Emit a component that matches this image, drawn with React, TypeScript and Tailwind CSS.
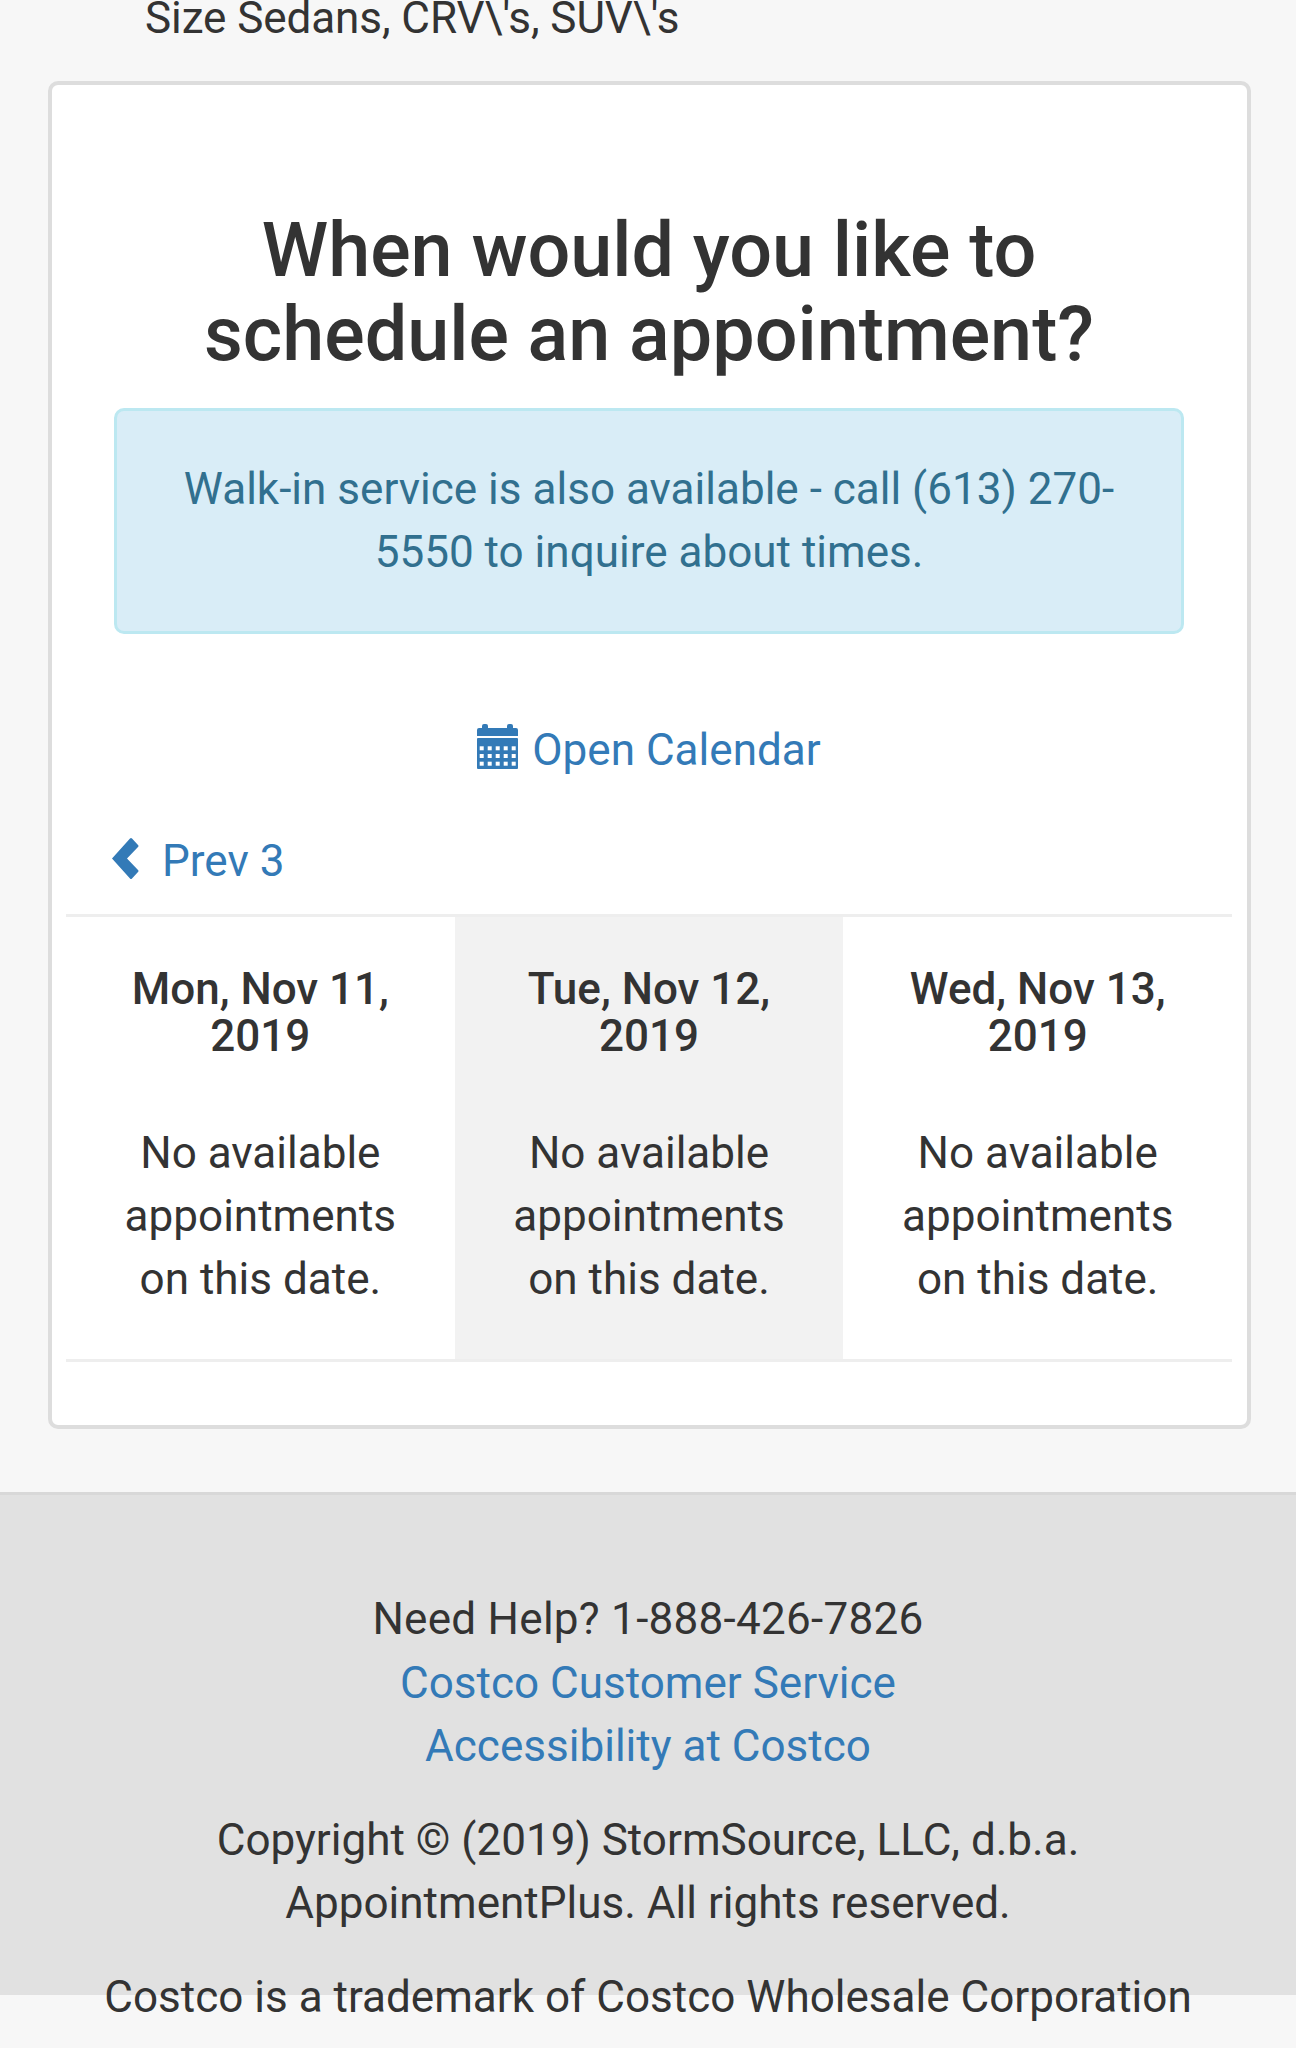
const font = "font-['Roboto',sans-serif]";

const days = ['Mon, Nov 11, 2019', 'Tue, Nov 12, 2019', 'Wed, Nov 13, 2019'];

function CalendarIcon() {
  const dots = [];
  for (let r = 0; r < 3; r++) {
    for (let c = 0; c < 5; c++) {
      dots.push(<rect key={`${r}-${c}`} x={2.7 + c * 8} y={22.3 + r * 7.7} width="4" height="4" fill="#fff" />);
    }
  }
  return (
    <svg viewBox="0 0 41 45" className="w-[41px] h-[45px] mb-[8px] shrink-0" fill="#337ab7">
      <path d="M2 4h3V2a2 2 0 0 1 2-2h2a2 2 0 0 1 2 2v2h19V2a2 2 0 0 1 2-2h2a2 2 0 0 1 2 2v2h3a2 2 0 0 1 2 2v6H0V6a2 2 0 0 1 2-2z" />
      <rect x="0" y="14" width="41" height="31" rx="1" />
      {dots}
    </svg>
  );
}

function ChevronIcon() {
  return (
    <svg viewBox="0 0 27 41" className="w-[27px] h-[41px] mb-[6px] shrink-0" fill="#337ab7">
      <path d="M0 20.5 18 .5q1-1 2 0l6 6.5q1 1 0 2L15 20.5 26 32q1 1 0 2l-6 6.5q-1 1-2 0z" />
    </svg>
  );
}

function DayColumn({ label, active }: { label: string; active?: boolean }) {
  return (
    <div className={`flex-1 px-[50px] pt-[49px] pb-[48px] text-center ${active ? 'bg-[#f2f2f2]' : ''}`}>
      <h5 className="text-[44px] leading-[47px] font-medium">{label}</h5>
      <p className="mt-[62px] leading-[63px]">No available appointments on this date.</p>
    </div>
  );
}

export default function App() {
  return (
    <div className={`${font} bg-[#f7f7f7] text-[#333] h-[2048px] overflow-hidden text-[44.06px] leading-[63px]`}>
      <div className="-mt-[13px] pl-[145px] tracking-[-0.1px]">Size Sedans, CRV\'s, SUV\'s</div>

      <div className="ml-[48px] mr-[45px] mt-[31px] h-[1348px] border-[4px] border-[#ddd] rounded-[10px] bg-white pl-[14px] pr-[15px]">
        <h3 className="mt-[124px] text-center text-[75.5px] leading-[83.6px] font-medium">
          When would you like to
          <br />
          schedule an appointment?
        </h3>

        <div className="ml-[48px] mr-[48px] mt-[32px] h-[226px] border-[3px] border-[#bce8f1] rounded-[10px] bg-[#d9edf7] px-[50px] pt-[47px] text-center text-[#31708f]">
          Walk-in service is also available - call (613) 270-
          <br />
          5550 to inquire about times.
        </div>

        <div className="mt-[85px] flex items-center justify-center gap-[14px] text-[#337ab7]">
          <CalendarIcon />
          <span>Open Calendar</span>
        </div>

        <div className="mt-[48px] ml-[46px] flex items-center gap-[23px] text-[#337ab7]">
          <ChevronIcon />
          <span>Prev 3</span>
        </div>

        <div className="mt-[21px] flex border-y-[3px] border-[#eee]">
          {days.map((d, i) => (
            <DayColumn key={d} label={d} active={i === 1} />
          ))}
        </div>
      </div>

      <div className="mt-[63px] h-[503px] border-t-[3px] border-[#d8d8d8] bg-[#e1e1e1] pt-[93px] text-center">
        <div className="tracking-[0.26px]">Need Help? 1-888-426-7826</div>
        <div className="mt-[1px] text-[#337ab7]">Costco Customer Service</div>
        <div className="text-[#337ab7]">Accessibility at Costco</div>
        <p className="mt-[31px]">
          Copyright © (2019) StormSource, LLC, d.b.a.
          <br />
          AppointmentPlus. All rights reserved.
        </p>
        <p className="mt-[31px]">Costco is a trademark of Costco Wholesale Corporation</p>
      </div>
    </div>
  );
}
